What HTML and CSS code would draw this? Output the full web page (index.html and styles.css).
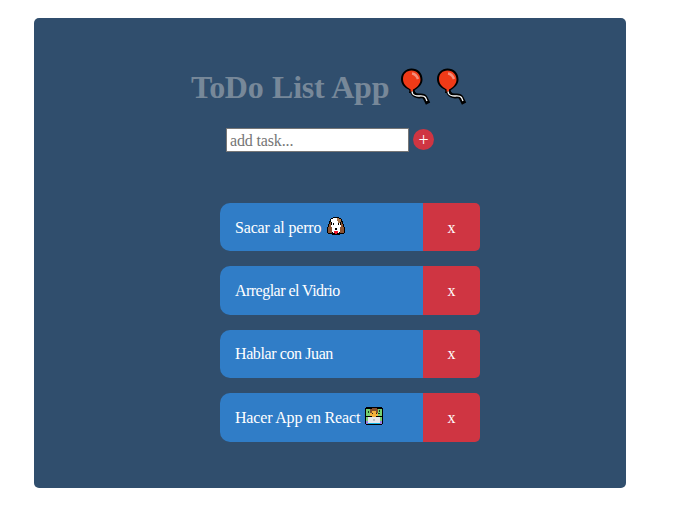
FILE: index.html
```html
<!DOCTYPE html>
<html lang="es">
<head>
<meta charset="utf-8">
<title>ToDo List App</title>
<link rel="stylesheet" href="styles.css">
</head>
<body>
<svg class="defs" width="0" height="0">
  <symbol id="balloon" viewBox="0 0 30 37">
    <path d="M11 22 L12 25 Q14 28 18 28 Q23 27.5 24 29.500 L26 33.500" fill="none" stroke="#000" stroke-width="4.800" stroke-linecap="square"/>
    <path d="M10.5 0.500 C17 0.500 21.500 5 21.500 11.500 C21.500 16 18 20 13 22.5 L13.500 25 L8 25 L8.500 22 C3 19.500 0 16 0 11 C0 5 5 0.500 10.500 0.500Z" fill="#000"/>
    <path d="M10.500 2.500 C16 2.500 19.500 6.500 19.500 11.500 C19.500 16 16 19.500 12 21.500 L12 23.500 L9.500 23.500 L9.700 21.500 C4.500 18.500 2 15.500 2 11 C2 6 5.500 2.500 10.500 2.500Z" fill="#f03a17"/>
    <path d="M11 5.500 Q15 6 17 11" fill="none" stroke="#f58d7a" stroke-width="2.500"/>
    <path d="M11 23.500 L11.500 25.500 Q13 28 18 28 Q23 27.500 24.500 29.500 L26 33" fill="none" stroke="#fff" stroke-width="1.300"/>
  </symbol>
</svg>
<main class="card">
  <h1 class="title"><span class="title-text">ToDo List App</span><svg class="balloon"><use href="#balloon"/></svg><svg class="balloon"><use href="#balloon"/></svg></h1>
  <form class="form">
    <input class="field" type="text" placeholder="add task...">
    <button class="add" type="button">+</button>
  </form>
  <ul class="list">
    <li class="item"><span class="task"><span class="snug">Sacar al perro</span>
      <svg class="emoji dog" viewBox="0 0 18 18" shape-rendering="crispEdges">
        <path d="M6 0h6v1h2v1h1v2h1v3h1v3h1v6h-1v1h-4v1H5v-1H1v-1H0v-6h1V7h1V4h1V2h1V1h2z" fill="#000"/>
        <path d="M6 1h6v1h2v10h-1v3h-1v1H6v-1H5v-3H4V2h2z" fill="#fff"/>
        <path d="M10 1h2v1h2v6h-1V6h-2V4h-1z" fill="#a9764c"/>
        <path d="M3 5h1v5h1v6H1v-6h1V7h1zM14 5h1v2h1v3h1v6h-4v-6h1z" fill="#8c5434"/>
        <path d="M4 5h1v3H4zM13 5h1v3h-1zM6 6h1v2H6zM11 6h1v2h-1zM8 11h2v2H8zM6 16h6v1H6z" fill="#000"/>
        <path d="M7 14h4v2h-1v1H8v-1H7z" fill="#f0182c"/>
      </svg></span><button class="remove" type="button">x</button></li>
    <li class="item"><span class="task"><span class="tightest">Arreglar el Vidrio</span></span><button class="remove" type="button">x</button></li>
    <li class="item"><span class="task"><span class="tight">Hablar con Juan</span></span><button class="remove" type="button">x</button></li>
    <li class="item"><span class="task"><span class="snug">Hacer App en React</span>
      <svg class="emoji" viewBox="0 0 18 18" shape-rendering="crispEdges">
        <path d="M1 0h16v1h1v16h-1v1H1v-1H0V1h1z" fill="#000"/>
        <path d="M1 2h4v7H1zM13 2h4v7h-4zM1 10h2v4H1zM15 10h2v4h-2z" fill="#76d071"/>
        <path d="M3 4h1v2H3zM14 3h1v2h-1zM13 6h2v1h-2z" fill="#173a1b"/>
        <path d="M5 4h8v5h-2v1H7V9H5z" fill="#f6b13b"/>
        <path d="M5 2h2V1h5v1h1v4h-2V4H7v2H5z" fill="#86502c"/>
        <path d="M7 6h1v1H7zM11 6h1v1h-1z" fill="#222"/>
        <path d="M3 10h12v7H3z" fill="#e5e5e8"/>
        <path d="M8 12h2v2H8z" fill="#bfc0c5"/>
        <path d="M1 14h2v3H1zM15 14h2v3h-2z" fill="#9a7cde"/>
        <path d="M3 16h12v1H3z" fill="#10b5e8"/>
      </svg></span><button class="remove" type="button">x</button></li>
  </ul>
</main>
</body>
</html>
```
FILE: styles.css
```css
* { box-sizing: border-box; }

body {
  margin: 0;
  background: #fff;
  font: 16px/18px "Liberation Serif", "Times New Roman", serif;
}

.defs { display: block; }

.card {
  width: 592px;
  height: 470px;
  margin: 18px 0 0 34px;
  padding: 50px 0 0;
  border-radius: 5px;
  background: #304e6d;
}

.title {
  display: flex;
  align-items: flex-start;
  height: 37px;
  margin: 0 0 0 157px;
  color: #778899;
  font-size: 32px;
  line-height: 37px;
  white-space: nowrap;
}

.title-text {
  width: 210px;
  padding-top: 1px;
  letter-spacing: -0.28px;
  word-spacing: 1px;
}

.balloon { width: 30px; height: 37px; margin-right: 6px; }

.form {
  display: flex;
  align-items: flex-start;
  gap: 4px;
  margin: 23px 0 0 192px;
}

.field {
  width: 183px;
  height: 24px;
  padding: 2px 3px 1px;
  border: 1px solid #767676;
  background: #fff;
  font: inherit;
  letter-spacing: -0.15px;
}

.field::placeholder { color: #757575; }

.add {
  width: 21px;
  height: 21px;
  margin-top: 1px;
  padding: 1px 0 0;
  border: 0;
  border-radius: 50%;
  background: #cf3542;
  color: #fff;
  font: inherit;
  font-size: 18px;
  line-height: 20px;
}

.list {
  display: flex;
  flex-direction: column;
  gap: 15px;
  width: 260px;
  margin: 51px 0 0 186px;
  padding: 0;
  list-style: none;
}

.item { display: flex; height: 48.4px; }

.task {
  display: flex;
  align-items: center;
  gap: 5px;
  width: 203px;
  padding: 1px 0 0 15px;
  border-radius: 10px 0 0 10px;
  background: #307dc7;
  color: #fff;
  white-space: nowrap;
}

.snug { letter-spacing: -0.18px; }
.tight { letter-spacing: -0.4px; }
.tightest { letter-spacing: -0.53px; }

.emoji { width: 18px; height: 18px; margin-top: -4px; }
.dog { margin-left: 1px; }

.remove {
  width: 57px;
  padding: 1px 0 0;
  border: 0;
  border-radius: 0 5px 5px 0;
  background: #cf3542;
  color: #fff;
  font: inherit;
}
```
